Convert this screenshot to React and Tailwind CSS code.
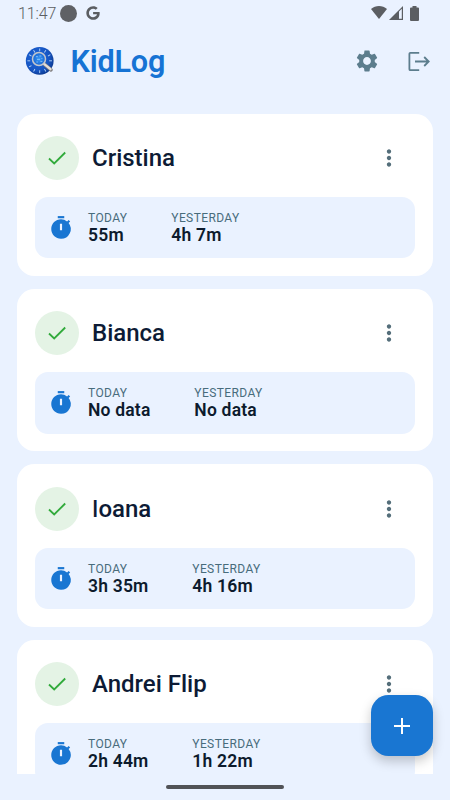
import { FaGoogle } from "react-icons/fa";
import { MdSettings, MdMoreVert } from "react-icons/md";

const kids = [
  { name: "Cristina", today: "55m", yesterday: "4h 7m" },
  { name: "Bianca", today: "No data", yesterday: "No data" },
  { name: "Ioana", today: "3h 35m", yesterday: "4h 16m" },
  { name: "Andrei Flip", today: "2h 44m", yesterday: "1h 22m" },
];

const StatusBar = () => (
  <div className="flex h-[26px] shrink-0 items-center pl-[18px] pr-[31px] text-[#5b5e62]">
    <span className="w-[39px] pt-px text-[16px] leading-none font-light tracking-[-0.1px] whitespace-nowrap">11:47</span>
    <span className="ml-[3px] size-[17px] rounded-full bg-[#5f6165]"></span>
    <FaGoogle className="ml-[9px] size-[14px]" />
    <div className="ml-auto flex items-center">
      <svg className="mb-px h-[13px] w-[16px]" viewBox="0 0 16 13" fill="currentColor">
        <path d="M0 3C4.500-1 11.500-1 16 3L8 13Z" />
      </svg>
      <svg className="ml-[2px] h-[14px] w-[14px]" viewBox="0 0 14 14">
        <path d="M0 14 14 0V14Z" fill="currentColor" />
        <path d="M10 5.600 12.800 2.800V12.800H10Z" fill="#eaf2ff" />
      </svg>
      <svg className="ml-[7px] h-[15px] w-[9px]" viewBox="0 0 9 15" fill="currentColor">
        <path d="M2.500 0H6.500V1.500H8Q9 1.500 9 2.500V14Q9 15 8 15H1Q0 15 0 14V2.500Q0 1.500 1 1.500H2.500Z" />
      </svg>
    </div>
  </div>
);

const ticks = [0, 30, 60, 90, 150, 180, 210, 240, 270, 300, 330];

const Logo = () => (
  <svg className="size-[30px]" viewBox="0 0 30 30">
    <defs>
      <radialGradient id="dial" cx="40%" cy="40%" r="65%">
        <stop offset="0" stopColor="#1f68dc" />
        <stop offset="0.7" stopColor="#1655c2" />
        <stop offset="1" stopColor="#0b378c" />
      </radialGradient>
      <radialGradient id="lens">
        <stop offset="0" stopColor="#3c9af4" />
        <stop offset="1" stopColor="#1565d4" />
      </radialGradient>
    </defs>
    <circle cx="14.700" cy="14.800" r="13.900" fill="url(#dial)" />
    {ticks.map((angle) => (
      <path
        key={angle}
        d="M14.700 2.500V5.300"
        stroke="#b9d7f8"
        strokeWidth="0.9"
        transform={`rotate(${angle} 14.700 14.800)`}
      />
    ))}
    {/* Magnifier */}
    <path d="M19.500 18.300 26 23.900" stroke="#817f80" strokeWidth="3.600" strokeLinecap="round" />
    <path d="M19 17.800 25.500 23.200" stroke="#e3dfda" strokeWidth="2.300" strokeLinecap="round" />
    <circle cx="14" cy="13" r="6.500" fill="url(#lens)" stroke="#c3c6cc" strokeWidth="1.500" />
    <path d="M10.900 10.700h2M14.400 10h2M12 13.400h3M15.400 15.400h2M11.400 16h1.500M16.400 12.400h1" stroke="#8bc5fb" strokeWidth="0.9" />
  </svg>
);

const Header = () => (
  <header className="flex h-[70px] shrink-0 items-center pl-[25px] pr-[18px]">
    <Logo />
    <h1 className="ml-[15.500px] text-[30.600px] leading-[31px] font-[560] tracking-[-0.200px] text-[#1673d4]">KidLog</h1>
    <button className="ml-auto text-[#5c7d8d]">
      <MdSettings className="size-[26px]" />
    </button>
    <button className="ml-[26px] text-[#5c7d8d]">
      <svg className="size-[26px]" viewBox="0 0 26 26" fill="none" stroke="currentColor" strokeWidth="1.800">
        <path d="M13.200 4.800H4.400Q3.400 4.800 3.400 5.800V21.200Q3.400 22.200 4.400 22.200H13.200" />
        <path d="M9 13.500H22.700M18.200 9 22.700 13.500 18.200 18" />
      </svg>
    </button>
  </header>
);

const Timer = () => (
  <svg className="size-[26px] shrink-0" viewBox="0 0 24 24" fill="#1976d2">
    <path d="M9 1h6v2H9z" />
    <path
      fillRule="evenodd"
      d="m19.030 7.390 1.420-1.420c-.43-.51-.9-.99-1.410-1.410l-1.420 1.420A8.962 8.962 0 0 0 12 4c-4.970 0-9 4.030-9 9s4.020 9 9 9a8.994 8.994 0 0 0 7.030-14.610zM13 14h-2V8h2v6z"
    />
  </svg>
);

const Stat = ({ label, value }) => (
  <div>
    <div className="text-[12px] leading-[16px] tracking-[0.4px] text-[#486c7c]">{label}</div>
    <div className="-mt-px mb-px text-[17.500px] leading-[20px] font-semibold tracking-[0.2px] text-[#0d1b2d]">{value}</div>
  </div>
);

const plainInitial = "first-letter:font-['Inter'] first-letter:text-[23.500px]";

const KidCard = ({ kid }) => (
  <div className="h-[162.300px] shrink-0 rounded-[17.500px] bg-white px-[17.600px] pt-[18px]">
    <div className="flex h-[52.500px] items-center">
      <div className="flex size-[44px] items-center justify-center rounded-full bg-[#e4f3e5]">
        <svg className="size-[22px]" viewBox="0 0 22 22" fill="none" stroke="#31aa3b" strokeWidth="1.800">
          <path d="M3 11.500 8.200 16.500 19.200 5.500" />
        </svg>
      </div>
      <h2
        className={`ml-[13px] text-[24px] leading-[24px] font-medium text-[#0d1b35] ${
          kid.name.startsWith("I") ? plainInitial : ""
        }`}
      >
        {kid.name}
      </h2>
      <button className="ml-auto mr-[13px] text-[#546e7a]">
        <MdMoreVert className="size-[26px]" />
      </button>
    </div>
    <div className="mt-[12.700px] flex h-[61.300px] items-center rounded-[13px] bg-[#eaf2ff] px-[13px] pt-px">
      <Timer />
      <div className="ml-[14px] flex gap-[43.800px]">
        <Stat label="TODAY" value={kid.today} />
        <Stat label="YESTERDAY" value={kid.yesterday} />
      </div>
    </div>
  </div>
);

const App = () => {
  return (
    <div className="relative flex h-[800px] w-[450px] flex-col overflow-hidden bg-[#eaf2ff] font-['Roboto',sans-serif]">
      <StatusBar />
      <Header />
      <main className="mt-[17.700px] flex h-[660px] flex-col gap-[13.100px] overflow-hidden px-[17.400px]">
        {kids.map((kid) => (
          <KidCard key={kid.name} kid={kid} />
        ))}
      </main>
      <div className="mx-auto mt-[11px] h-[4px] w-[118px] shrink-0 rounded-full bg-[#515357]"></div>

      {/* Floating add button */}
      <button className="absolute right-[17.400px] bottom-[43.700px] flex size-[61.300px] items-center justify-center rounded-[17.500px] bg-[#1976d2] pt-px shadow-[0_5px_12px_rgba(0,0,0,0.22)]">
        <svg className="size-[16px]" viewBox="0 0 16 16" stroke="white" strokeWidth="2">
          <path d="M8 0V16M0 8H16" />
        </svg>
      </button>
    </div>
  );
};

export default App;
